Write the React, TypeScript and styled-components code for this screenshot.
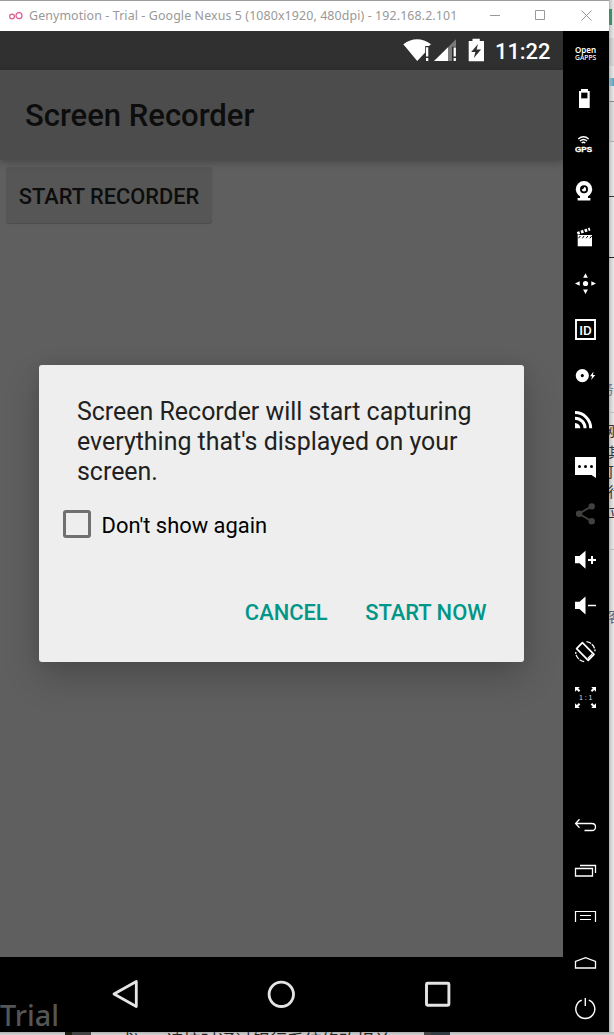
import React from "react";
import styled, { createGlobalStyle } from "styled-components";

const GlobalStyle = createGlobalStyle`
  * { box-sizing: border-box; }
  html, body { margin: 0; padding: 0; overflow: hidden; background: #dcdcdc; }
  button { border: 0; padding: 0; background: none; font: inherit; color: inherit; }
`;

const Desktop = styled.div`
  width: 614px;
  height: 1035px;
  display: grid;
  grid-template-columns: 609px 5px;
  grid-template-rows: 1032px 3px;
  overflow: hidden;
  background: #dcdcdc;
`;

const Window = styled.main`
  display: flex;
  flex-direction: column;
  background: #000;
`;

const TitleBar = styled.header`
  height: 31px;
  flex: none;
  display: flex;
  align-items: center;
  border-top: 1px solid #9c9c9c;
  background: #fff;
  padding-left: 8px;
`;

const WindowTitle = styled.h1`
  flex: 1;
  margin: 0 0 0 5px;
  font: 400 12.4px/18px "Noto Sans", sans-serif;
  letter-spacing: 0.11px;
  color: #999;
  white-space: nowrap;
`;

const WindowControls = styled.div`
  display: flex;
  height: 30px;
`;

const WindowBody = styled.div`
  display: flex;
  flex: 1;
`;

const Phone = styled.section`
  position: relative;
  width: 563px;
  display: flex;
  flex-direction: column;
  font-family: Roboto, sans-serif;
`;

const StatusBar = styled.div`
  height: 39px;
  flex: none;
  display: flex;
  justify-content: flex-end;
  align-items: center;
  padding-right: 12.5px;
  background: #303030;
`;

const Clock = styled.span`
  margin-left: 9.5px;
  margin-top: 3px;
  font-size: 21.9px;
  line-height: 26px;
  font-weight: 500;
  color: #fff;
`;

const AppBar = styled.div`
  height: 90px;
  flex: none;
  display: flex;
  align-items: center;
  padding: 1px 0 0 25px;
  background: #4c4c4c;
  box-shadow: 0 2px 8px rgba(0, 0, 0, 0.28);
  z-index: 1;
`;

const AppTitle = styled.h2`
  margin: 0;
  font-size: 31px;
  line-height: 38px;
  font-weight: 500;
  color: #0d0d0d;
`;

const AppContent = styled.div`
  height: 797px;
  display: flex;
  flex-direction: column;
  align-items: flex-start;
  padding: 7px 0 0 6px;
  background: #5f5f5f;
`;

const RecordButton = styled.button`
  width: 206px;
  height: 56px;
  border-radius: 3px;
  background: #565656;
  box-shadow: 0 1px 1px rgba(0, 0, 0, 0.2);
  font-size: 21.8px;
  font-weight: 500;
  color: #0d0d0d;
  padding-top: 2px;
  white-space: nowrap;
`;

const Dialog = styled.div`
  align-self: center;
  width: 485px;
  height: 297px;
  margin: 142px 0 0 -6px;
  padding: 32px 37.5px 0 38px;
  border-radius: 3px;
  background: #eee;
  box-shadow: 0 16px 36px rgba(0, 0, 0, 0.2), 0 0 14px rgba(0, 0, 0, 0.08);
`;

const Message = styled.p`
  margin: 0;
  font-size: 24.95px;
  line-height: 29.8px;
  color: #212121;
  white-space: nowrap;
`;

const CheckRow = styled.label`
  display: flex;
  align-items: center;
  gap: 11px;
  margin: 24px 0 0 -14.4px;
  font-size: 21.9px;
  line-height: 28px;
  color: #000;
`;

const CheckLabel = styled.span`
  padding-top: 2px;
  margin-bottom: -2px;
`;

const CheckBox = styled.span`
  width: 28px;
  height: 28px;
  border: 3px solid #707070;
  border-radius: 3px;
`;

const Actions = styled.div`
  display: flex;
  justify-content: flex-end;
  gap: 37.5px;
  margin-top: 61px;
  font-size: 21.9px;
  line-height: 28px;
  font-weight: 500;
  color: #009688;
`;

const NavBar = styled.nav`
  height: 75px;
  display: flex;
  justify-content: center;
  background: #000;
`;

const NavButton = styled.button`
  width: 156.4px;
  height: 74px;
  display: flex;
  align-items: center;
  justify-content: center;
`;

const TrialMark = styled.span`
  position: absolute;
  left: 0;
  bottom: 0;
  font: 500 28.8px/35px "Noto Sans", sans-serif;
  color: #555;
`;

const Toolbar = styled.aside`
  width: 46px;
  display: flex;
  flex-direction: column;
  justify-content: space-between;
  background: #000;
`;

const ToolGroup = styled.div`
  display: flex;
  flex-direction: column;
`;

const ToolButton = styled.button`
  width: 46px;
  height: 46px;
  display: block;
  svg { display: block; }
`;

const SideStrip = styled.div`
  display: flex;
  flex-direction: column;
  background: linear-gradient(90deg, #b4b4b4, #d4d4d4 40%, #e8e8e8);
  overflow: hidden;
`;

const Segment = styled.div<{ $h: number; $line?: string; $fill?: string }>`
  height: ${(p) => p.$h}px;
  flex: none;
  overflow: hidden;
  border-bottom: ${(p) => (p.$line ? `1px solid ${p.$line}` : "0")};
  background: ${(p) => p.$fill ?? "transparent"};
`;

const Glyph = styled(Segment)<{ $tone?: string; $shift?: number }>`
  font: 14px/20px "Noto Sans CJK SC", sans-serif;
  text-indent: ${(p) => p.$shift ?? -1}px;
  white-space: nowrap;
  color: ${(p) => p.$tone ?? "#333"};
`;

const GreenTab = styled.div`
  width: 3px;
  height: 16px;
  margin-top: 9px;
  background: #3f8f62;
`;

const BottomStrip = styled.div`
  grid-column: 1 / -1;
  height: 3px;
  display: flex;
  overflow: hidden;
  background: linear-gradient(#b0b0b0, #d6d6d6);
`;

const PictureEdge = styled.div<{ $dark: string; $light: string }>`
  width: 26px;
  height: 3px;
  background: linear-gradient(90deg, ${(p) => p.$dark} 28%, ${(p) => p.$light} 28%);
`;

const PageText = styled.div<{ $width: number; $indent: number }>`
  width: ${(p) => p.$width}px;
  height: 3px;
  overflow: hidden;
  font: 17.3px/17px "Noto Sans CJK SC", sans-serif;
  text-indent: ${(p) => p.$indent}px;
  white-space: nowrap;
  color: #222;
  span { display: block; margin-top: -1px; }
`;

const W = "#fff";

const topTools: { name: string; art: React.ReactNode }[] = [
  {
    name: "Open GAPPS",
    art: (
      <g fill={W} fontFamily="Noto Sans, sans-serif">
        <text x="11.9" y="22" fontSize="8.6" fontWeight="600" textLength="21.2" lengthAdjust="spacingAndGlyphs">Open</text>
        <text x="12" y="29.2" fontSize="7" fontWeight="500" textLength="21.2" lengthAdjust="spacingAndGlyphs">GAPPS</text>
      </g>
    ),
  },
  {
    name: "Battery",
    art: (
      <>
        <path d="M18 12h7v2h1.700v17H16V14h2z" fill={W} />
        <path d="M18 15h6.600v7H18z" fill="#aaa" />
        <path d="M18.300 16h6v5h-6z" fill="#000" />
      </>
    ),
  },
  {
    name: "GPS",
    art: (
      <>
        <g fill="none" stroke={W} strokeWidth="1.4">
          <path d="M15.300 16q5.200-4.500 10.400 0M17 18q3.500-3 7 0M18.700 20q1.800-1.400 3.600 0" />
        </g>
        <text x="12" y="28.5" fontSize="7.9" fontWeight="700" fill={W} stroke={W} strokeWidth="0.3" fontFamily="Liberation Sans, sans-serif" textLength="17.2" lengthAdjust="spacingAndGlyphs">GPS</text>
      </>
    ),
  },
  {
    name: "Camera",
    art: (
      <>
        <path d="M17 27h8v2h2.400v2.600H14.600V29H17z" fill={W} />
        <circle cx="21" cy="20.2" r="8.2" fill={W} />
        <circle cx="21" cy="20.2" r="4" fill="#000" />
        <path d="M21 18a2.200 2.200 0 1 1-2.200 2.200c1.200.3 2.300-.8 2.200-2.200z" fill={W} />
      </>
    ),
  },
  {
    name: "Capture",
    art: (
      <>
        <path d="M14.700 20H29v11.300H14.700z" fill={W} />
        <path d="M15.500 23.300l1.800-2.300M19.300 23.300l1.800-2.300M23.100 23.300l1.800-2.300M26.900 23.300l1.800-2.300" stroke="#000" strokeWidth="1" />
        <path d="M14.300 18.400l12.700-4.400" stroke={W} strokeWidth="3" strokeDasharray="2.6 1.3" />
      </>
    ),
  },
  {
    name: "Move",
    art: (
      <g fill={W}>
        <circle cx="22.5" cy="22.5" r="2.6" />
        <path d="M12 22.500l4.700-2.300v4.600zM33 22.500l-4.700-2.300v4.600zM22.500 12.300l-2.400 4.400h4.800zM22.500 33l-2.400-4.600h4.800z" />
      </g>
    ),
  },
  {
    name: "Identifiers",
    art: (
      <>
        <path d="M13 13h19v19H13z" fill="none" stroke={W} strokeWidth="1.9" />
        <text x="16.2" y="27.5" fontSize="13.4" fontWeight="500" fill={W} fontFamily="Roboto, sans-serif" textLength="12.6" lengthAdjust="spacingAndGlyphs">ID</text>
      </>
    ),
  },
  {
    name: "Disk",
    art: (
      <g fill={W}>
        <path fillRule="evenodd" d="M19.300 16a6.600 6.600 0 1 1 0 13.200a6.600 6.600 0 1 1 0-13.200m0 5a1.600 1.600 0 1 0 0 3.200a1.600 1.600 0 1 0 0-3.200" />
        <path d="M30.500 18.600l-3.500 4.600h2.100l-1 3.900 4.200-5.100h-2.300z" />
      </g>
    ),
  },
  {
    name: "Network",
    art: (
      <g fill="none" stroke={W} strokeWidth="3">
        <path d="M12 13.600a15.700 15.700 0 0 1 15.700 15.700M12 19.200a10.100 10.100 0 0 1 10.100 10.100" />
        <path d="M12 24a5.300 5.300 0 0 1 5.300 5.300H12z" fill={W} stroke="none" />
      </g>
    ),
  },
  {
    name: "Phone",
    art: (
      <>
        <path d="M12 12h21v21l-4.500-3H12z" fill={W} />
        <g fill="#000">
          <circle cx="16.5" cy="21.5" r="1.5" />
          <circle cx="22.5" cy="21.5" r="1.5" />
          <circle cx="28.5" cy="21.5" r="1.5" />
        </g>
      </>
    ),
  },
  {
    name: "Share",
    art: (
      <g fill="#41413f" stroke="#41413f">
        <path d="M28.700 15.200L16 22.700l12.700 7.500" fill="none" strokeWidth="1.9" />
        <g stroke="none">
          <circle cx="28.7" cy="15.4" r="3.2" />
          <circle cx="16.1" cy="22.7" r="3.2" />
          <circle cx="28.7" cy="30.2" r="3.2" />
        </g>
      </g>
    ),
  },
  {
    name: "Volume up",
    art: (
      <>
        <path d="M12 19h4.500l6-5.300v18l-6-5.400H12z" fill={W} />
        <path d="M25 23h8M29 19v8" stroke={W} strokeWidth="2" />
      </>
    ),
  },
  {
    name: "Volume down",
    art: (
      <>
        <path d="M12 18.700h4.500l6-5.300v18l-6-5.400H12z" fill={W} />
        <path d="M25 22.500h8" stroke={W} strokeWidth="1.5" />
      </>
    ),
  },
  {
    name: "Rotate",
    art: (
      <g fill="none" stroke={W}>
        <path d="M19.400 13.700L31 25.400l-5.800 6L13.600 19.700z" strokeWidth="1.7" strokeLinejoin="round" />
        <path d="M24.800 29.500l4.400-4.500" strokeWidth="1.2" />
        <path d="M23.500 12.700a9.700 9.700 0 0 1 8.500 9.500M21.200 32.600a9.700 9.700 0 0 1-8.500-9.500" strokeWidth="1.3" strokeDasharray="5 1" />
      </g>
    ),
  },
  {
    name: "Pixel perfect",
    art: (
      <>
        <path d="M12 12h4.800l-1.500 1.500 2 2-1.500 1.500-2-2L12 16.800zM33 12h-4.800l1.500 1.500-2 2 1.500 1.500 2-2L33 16.800zM12 33h4.800l-1.500-1.500 2-2-1.500-1.500-2 2L12 28.200zM33 33h-4.800l1.500-1.500-2-2 1.500-1.500 2 2L33 28.200z" fill={W} />
        <text x="16" y="25.2" fontSize="7" fill="#ddd" fontFamily="Liberation Sans, sans-serif" textLength="13.5">1:1</text>
      </>
    ),
  },
];

const bottomTools: { name: string; art: React.ReactNode }[] = [
  {
    name: "Back",
    art: (
      <path d="M16.500 17.300L12.600 21.500l3.900 4.300M12.600 21.500h16.200c2.500 0 3.700 1.500 3.700 3.500s-1.200 3.500-3.700 3.500h-7.300" fill="none" stroke={W} strokeWidth="1.3" />
    ),
  },
  {
    name: "Recents",
    art: <path d="M12.500 20.500h17v7.500h-17zM17 17.500h15.500V25" fill="none" stroke={W} strokeWidth="1.3" />,
  },
  {
    name: "Menu",
    art: (
      <g fill="none" stroke={W} strokeWidth="1.2">
        <path d="M12.500 28V17.500h20V28M17 21.500h11M17 25.500h11" />
      </g>
    ),
  },
  {
    name: "Home",
    art: <path d="M12.500 28v-6.500l10-3.800 10 3.800V28z" fill="none" stroke={W} strokeWidth="1.3" />,
  },
  {
    name: "Power",
    art: (
      <g fill="none" stroke={W} strokeWidth="1.4">
        <path d="M18.800 14.200a9.500 9.500 0 1 0 7 0M22.300 12v8" />
      </g>
    ),
  },
];

const Tool = ({ name, art }: { name: string; art: React.ReactNode }) => (
  <ToolButton aria-label={name}>
    <svg width="46" height="46" viewBox="0 0 46 46">{art}</svg>
  </ToolButton>
);

const StatusIcons = () => (
  <svg width="82" height="26" viewBox="0 0 82 26">
    <path d="M.3 6.300Q14 -3.800 28 6.300L26 8H22.200v6.600L14.200 23z" fill={W} />
    <path d="M23 9.300h2.300v9.200H23zM23 20h2.300v3H23z" fill={W} />
    <path d="M53 1.300v7.500h-4V23h-4V9.300z" fill="#7b7b7b" />
    <path d="M31 23L45 9.300V23z" fill={W} />
    <path d="M50.600 9.500h2.300v9h-2.300zM50.600 20h2.300v3h-2.300z" fill={W} />
    <path d="M69.500.7h7.300v2.200H81v20.300H65.700V2.900h3.800z" fill={W} />
    <path d="M75 6l-6.800 8h4.200l-1.600 6 7.300-8.400h-4.500z" fill="#303030" />
  </svg>
);

export default function App() {
  return (
    <>
      <GlobalStyle />
      <Desktop>
        <Window>
          <TitleBar>
            <svg width="16" height="16" viewBox="0 0 16 16">
              <circle cx="4" cy="8.5" r="2.4" fill="none" stroke="#dc5a90" strokeWidth="1.2" />
              <circle cx="11" cy="7.7" r="3" fill="none" stroke="#dc5a90" strokeWidth="1.2" />
            </svg>
            <WindowTitle>Genymotion - Trial - Google Nexus 5 (1080x1920, 480dpi) - 192.168.2.101</WindowTitle>
            <WindowControls>
              <svg width="120" height="30" viewBox="0 0 120 30" fill="none" stroke="#999">
                <path d="M1 14.500h10M46.500 9.500h9v9h-9zM92.500 9.500l10 10M102.500 9.500l-10 10" />
              </svg>
            </WindowControls>
          </TitleBar>
          <WindowBody>
            <Phone>
              <StatusBar>
                <StatusIcons />
                <Clock>11:22</Clock>
              </StatusBar>
              <AppBar>
                <AppTitle>Screen Recorder</AppTitle>
              </AppBar>
              <AppContent>
                <RecordButton>START RECORDER</RecordButton>
                <Dialog role="dialog">
                  <Message>
                    Screen Recorder will start capturing<br />
                    everything that's displayed on your<br />
                    screen.
                  </Message>
                  <CheckRow>
                    <CheckBox />
                    <CheckLabel>Don't show again</CheckLabel>
                  </CheckRow>
                  <Actions>
                    <button>CANCEL</button>
                    <button>START NOW</button>
                  </Actions>
                </Dialog>
              </AppContent>
              <NavBar>
                <NavButton aria-label="Back">
                  <svg width="30" height="32" viewBox="0 0 30 32">
                    <path d="M26.300 3.500v25L4 16z" fill="none" stroke="#e4e4e4" strokeWidth="2.8" strokeLinejoin="round" />
                  </svg>
                </NavButton>
                <NavButton aria-label="Home">
                  <svg width="30" height="30" viewBox="0 0 30 30">
                    <circle cx="15.3" cy="15.3" r="12.2" fill="none" stroke="#e4e4e4" strokeWidth="2.8" />
                  </svg>
                </NavButton>
                <NavButton aria-label="Overview">
                  <svg width="30" height="30" viewBox="0 0 30 30">
                    <rect x="3.5" y="4.3" width="22.4" height="22" rx="1" fill="none" stroke="#e4e4e4" strokeWidth="2.9" />
                  </svg>
                </NavButton>
              </NavBar>
              <TrialMark>Trial</TrialMark>
            </Phone>
            <Toolbar>
              <ToolGroup>
                {topTools.map((t) => <Tool key={t.name} {...t} />)}
              </ToolGroup>
              <ToolGroup>
                {bottomTools.map((t) => <Tool key={t.name} {...t} />)}
              </ToolGroup>
            </Toolbar>
          </WindowBody>
        </Window>
        <SideStrip>
          <Segment $h={38}><GreenTab /></Segment>
          <Segment $h={28} $fill="rgba(0,0,0,0.06)" />
          <Segment $h={12} />
          <Segment $h={8} $fill="linear-gradient(90deg, #7fb4cb 50%, #4c9fc0)" />
          <Segment $h={16} $line="#888" />
          <Segment $h={40} $line="#aaa" $fill="rgba(0,0,0,0.04)" />
          <Segment $h={55} $line="#333" />
          <Segment $h={61} $line="#222" />
          <Segment $h={120} />
          <Glyph $h={20} $tone="#69788c" $shift={-9}>务</Glyph>
          <Segment $h={15} $line="#bbb" />
          <Segment $h={7} />
          <Glyph $h={21} $shift={-8}>网</Glyph>
          <Glyph $h={20}>其</Glyph>
          <Glyph $h={20} $shift={-9}>可</Glyph>
          <Glyph $h={20}>行</Glyph>
          <Glyph $h={20}>立</Glyph>
          <Segment $h={29} $line="#bbb" />
          <Segment $h={56} />
          <Glyph $h={20} $tone="#5a6274">客</Glyph>
        </SideStrip>
        <BottomStrip>
          <PageText $width={65} $indent={0} />
          <PictureEdge $dark="#1c1c10" $light="#444" />
          <PageText $width={333} $indent={26}><span>式)、　请按时通过银行系统修改相关</span></PageText>
          <PictureEdge $dark="#444" $light="#333c42" />
        </BottomStrip>
      </Desktop>
    </>
  );
}
